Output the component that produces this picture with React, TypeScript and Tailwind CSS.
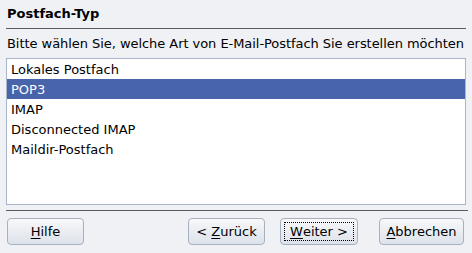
import React from "react";

const items = ["Lokales Postfach", "POP3", "IMAP", "Disconnected IMAP", "Maildir-Postfach"];

const Btn = ({ label, u, rest, w, focus }: { label?: string; u: string; rest: string; w: string; focus?: boolean }) => (
  <button
    className={`h-[27px] ${w} rounded-[4px] border border-[#a7b0be] bg-gradient-to-b from-[#f7f8fa] to-[#dde2ea] text-[13px] text-black flex items-center justify-center p-[3px]`}
  >
    <span
      className={`h-full w-full flex items-center justify-center whitespace-pre ${focus ? "border border-dotted border-black" : ""}`}
    >
      {label}
      <span className="underline underline-offset-2">{u}</span>
      {rest}
    </span>
  </button>
);

export default function App() {
  return (
    <div
      className="w-[472px] h-[253px] bg-[#eff1f5] text-black flex flex-col text-[13px] leading-none overflow-hidden"
      style={{ fontFamily: '"DejaVu Sans", sans-serif' }}
    >
      <div className="mx-[6px] h-[29px] border-b border-[#5c5c5c] flex items-center pl-[1px] pb-[1px]">
        <span className="font-bold">Postfach-Typ</span>
      </div>
      <div className="px-[7px] h-[29px] flex items-center whitespace-nowrap tracking-[-0.05px]">
        Bitte wählen Sie, welche Art von E-Mail-Postfach Sie erstellen möchten
      </div>
      <div className="mx-[6px] w-[460px] h-[147px] bg-white border border-[#a9b6c9] flex flex-col">
        {items.map((it) => (
          <div
            key={it}
            className={`h-[20px] pl-[4px] flex items-center ${it === "POP3" ? "bg-[#4864ab] text-white" : ""}`}
          >
            {it}
          </div>
        ))}
      </div>
      <div className="mx-[6px] w-[462px] mt-[5px] h-0 border-t border-[#5c5c5c]" />
      <div className="flex items-center mt-[7px] px-[7px]">
        <Btn u="H" rest="ilfe" w="w-[77px]" />
        <div className="flex-1" />
        <Btn label="< " u="Z" rest="urück" w="w-[77px]" />
        <div className="w-[15px]" />
        <Btn u="W" rest="eiter >" w="w-[78px]" focus />
        <div className="w-[21px]" />
        <Btn u="A" rest="bbrechen" w="w-[85px]" />
        <div className="w-[1px]" />
      </div>
    </div>
  );
}
